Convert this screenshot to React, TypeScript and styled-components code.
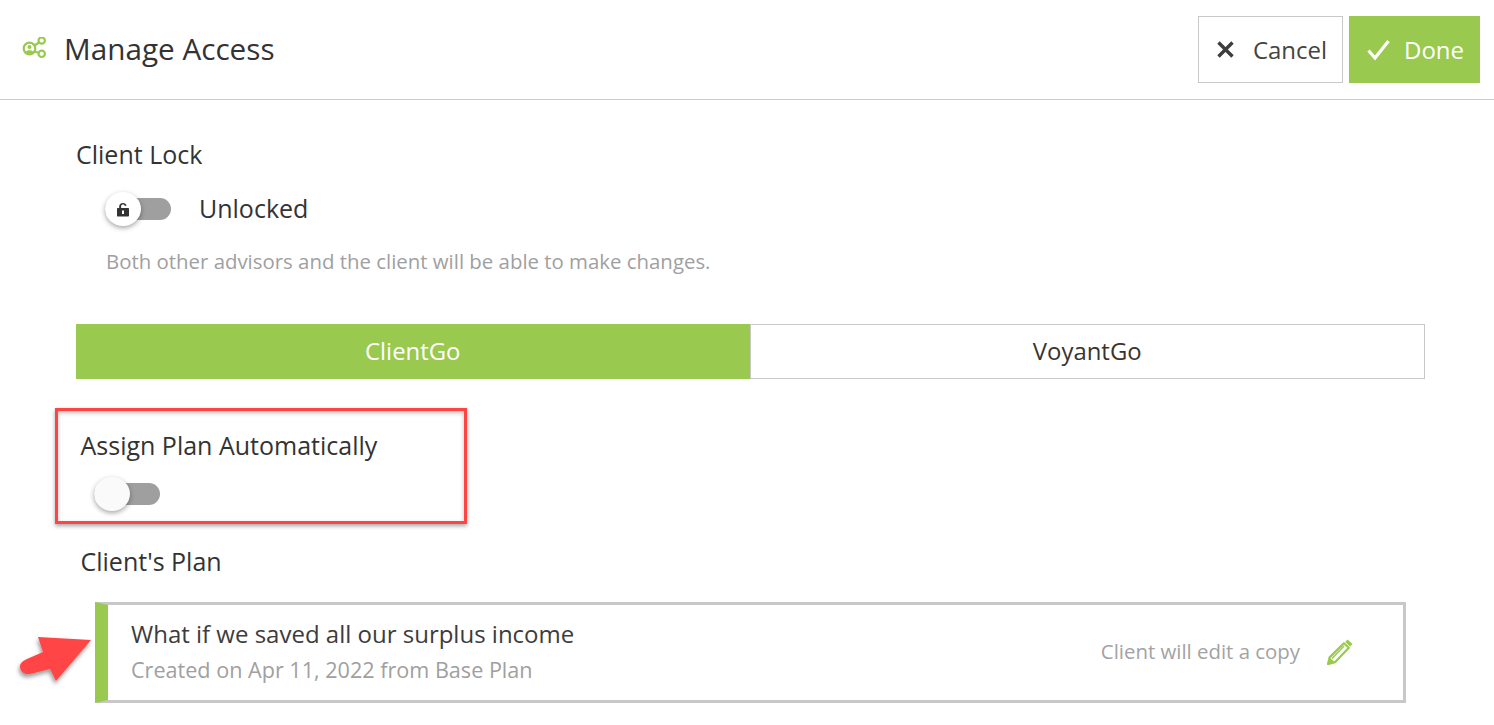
import React from "react";
import styled, { createGlobalStyle } from "styled-components";

const Global = createGlobalStyle`
  html, body { margin: 0; padding: 0; background: #fff; }
  body { font-family: "Open Sans", "Liberation Sans", sans-serif; color: #333; height: 725px; overflow: hidden; }
  * { box-sizing: border-box; }
`;

const Page = styled.div`
  position: relative;
  width: 1494px;
  height: 725px;
  overflow: hidden;
`;

const Header = styled.header`
  height: 100px;
  display: flex;
  align-items: flex-start;
  justify-content: space-between;
  padding: 16px 14px 0 22px;
  border-bottom: 1px solid #cccccc;
`;

const TitleGroup = styled.div`
  display: flex;
  align-items: center;
  height: 67px;
  gap: 16px;
`;

const Title = styled.h1`
  margin: 0 0 2px;
  font-size: 29.7px;
  font-weight: 500;
  color: #333;
  line-height: 36px;
`;

const Actions = styled.div`
  display: flex;
  gap: 6px;
`;

const ActionButton = styled.button<{ $primary?: boolean }>`
  height: 67px;
  width: ${(p) => (p.$primary ? "131px" : "145px")};
  display: flex;
  align-items: center;
  justify-content: center;
  gap: ${(p) => (p.$primary ? "14px" : "19px")};
  padding: 0 0 0 ${(p) => (p.$primary ? "2px" : "3px")};
  border: ${(p) => (p.$primary ? "none" : "1px solid #c8c8c8")};
  background: ${(p) => (p.$primary ? "#99c94f" : "#fff")};
  color: ${(p) => (p.$primary ? "#fff" : "#444")};
  font-family: inherit;
  font-size: 24px;
`;

const Content = styled.main`
  padding: 0 69px 0 76px;
`;

const SectionLabel = styled.div`
  font-size: 25px;
  font-weight: 500;
  color: #333;
  line-height: 32px;
  padding-top: 38px;
`;

const LockRow = styled.div`
  display: flex;
  align-items: center;
  height: 44px;
  margin-top: 17px;
  padding-left: 29px;
  gap: 28px;
`;

const Track = styled.span`
  position: relative;
  display: inline-block;
  width: 66px;
  height: 22px;
  border-radius: 11px;
  background: #9f9f9f;
`;

const Knob = styled.span<{ $fill: string }>`
  position: absolute;
  left: 0;
  top: -6px;
  width: 36px;
  height: 34px;
  border-radius: 50%;
  background: ${(p) => p.$fill};
  box-shadow: 0 2px 5px rgba(0, 0, 0, 0.35);
  display: flex;
  align-items: center;
  justify-content: center;
`;

const LockText = styled.span`
  font-size: 25px;
  font-weight: 500;
  color: #333;
  padding-bottom: 2px;
`;

const Hint = styled.p`
  margin: 16px 0 0 30px;
  font-size: 20.4px;
  line-height: 28px;
  color: #a0a0a0;
`;

const Tabs = styled.div`
  display: flex;
  height: 55px;
  margin-top: 49px;
  width: 1349px;
`;

const Tab = styled.div<{ $active?: boolean }>`
  flex: 1;
  display: flex;
  align-items: center;
  justify-content: center;
  padding-bottom: 2px;
  font-size: 23.9px;
  color: ${(p) => (p.$active ? "#fff" : "#3b342e")};
  background: ${(p) => (p.$active ? "#99c94f" : "#fff")};
  border: ${(p) => (p.$active ? "none" : "1px solid #c8c8c8")};
`;

const AssignBlock = styled.section`
  padding: 50px 0 0 4.5px;
`;

const InlineLabel = styled.div`
  font-size: 25px;
  font-weight: 500;
  color: #333;
  line-height: 32px;
`;

const SwitchRow = styled.div`
  margin-top: 21px;
  padding-left: 13.5px;
  height: 24px;
  display: flex;
  align-items: center;
`;

const PlanLabel = styled(InlineLabel)`
  margin-top: 39px;
`;

const PlanCard = styled.div`
  margin: 25px 0 0 14.5px;
  width: 1311px;
  height: 101px;
  display: flex;
  align-items: center;
  justify-content: space-between;
  border: 3px solid #c8c8c8;
  border-left: 13px solid #99c94f;
  padding: 0 49px 3px 23px;
`;

const PlanInfo = styled.div`
  display: flex;
  flex-direction: column;
  gap: 4px;
  padding-bottom: 1px;
`;

const PlanTitle = styled.div`
  font-size: 24px;
  line-height: 34px;
  color: #3c3c3c;
`;

const PlanMeta = styled.div`
  font-size: 21.6px;
  line-height: 30px;
  color: #a0a0a0;
`;

const PlanAction = styled.div`
  display: flex;
  align-items: center;
  gap: 27px;
  font-size: 20.4px;
  color: #a3a3a3;
`;

const Highlight = styled.div`
  position: absolute;
  left: 55px;
  top: 408px;
  width: 412px;
  height: 116px;
  border: 3px solid #ff4444;
  box-shadow: 0 2px 4px rgba(0, 0, 0, 0.35), inset 0 2px 4px rgba(0, 0, 0, 0.25);
  pointer-events: none;
`;

const ArrowMark = styled.svg`
  position: absolute;
  left: 16px;
  top: 632px;
  overflow: visible;
`;

const ShareIcon = () => (
  <svg width="26" height="26" viewBox="0 0 26 26" fill="none" stroke="#99c94f" strokeWidth="2.200">
    <circle cx="7.500" cy="11.500" r="5.800" />
    <circle cx="7.500" cy="10" r="2" fill="#99c94f" stroke="none" />
    <path d="M3.600 15c1-2.200 6.800-2.200 7.800 0l-2 1.600H5.600z" fill="#99c94f" stroke="none" />
    <circle cx="19.700" cy="3.500" r="3.200" />
    <circle cx="19.700" cy="16.800" r="3.200" />
    <path d="M12.400 8.500l4.600-3M12.400 14.500l4.600 1.500" />
  </svg>
);

const CloseIcon = () => (
  <svg width="17" height="17" viewBox="0 0 17 17" stroke="#3d3d3d" strokeWidth="3.400" fill="none">
    <path d="M1.500 1.500l14 14M15.500 1.500l-14 14" />
  </svg>
);

const CheckIcon = () => (
  <svg width="23" height="22" viewBox="0 0 23 22" stroke="#fff" strokeWidth="3.200" fill="none">
    <path d="M1.500 11.500l6.500 7.500L21.500 2" />
  </svg>
);

const LockIcon = () => (
  <svg width="14" height="15" viewBox="0 0 14 15">
    <path d="M3.200 6V4.200C3.200 2.200 4.800.9 7 .9c1.800 0 3.200 1 3.600 2.600l-1.800.4C8.600 3 7.900 2.600 7 2.600 5.900 2.600 5.100 3.300 5.100 4.300V6H12c.6 0 1 .4 1 1v6.500c0 .6-.4 1-1 1H2c-.6 0-1-.4-1-1V7c0-.6.4-1 1-1z" fill="#333" />
    <rect x="6" y="8.500" width="2" height="3.500" fill="#fff" />
  </svg>
);

const PencilIcon = () => (
  <svg width="27" height="27" viewBox="0 0 27 27">
    <path d="M20.500 1.500l5 4.500-2.300 2.500-5-4.500z" fill="#99c94f" />
    <path d="M16.900 5.300l4.900 4.500L8 24.300 1 26l1.600-6.600z" fill="none" stroke="#99c94f" strokeWidth="2.200" strokeLinejoin="round" />
    <path d="M5 20.500L17 8" stroke="#99c94f" strokeWidth="1.600" />
    <path d="M1 26l1.600-6.600 5.400 4.900z" fill="#99c94f" />
  </svg>
);

const Arrow = () => (
  <ArrowMark width="76" height="50" viewBox="0 0 76 50">
    <defs>
      <filter id="arrowShadow" x="-20%" y="-20%" width="140%" height="150%">
        <feDropShadow dx="-1" dy="3" stdDeviation="2" floodColor="#000" floodOpacity="0.4" />
      </filter>
    </defs>
    <path
      d="M22 5L75 8L40 49L34 37L14 42C9 43 4.500 40 4 35C4 31 7 29 11 27L27 20Z"
      fill="#ff4444"
      filter="url(#arrowShadow)"
    />
  </ArrowMark>
);

export default function App() {
  return (
    <Page>
      <Global />
      <Header>
        <TitleGroup>
          <ShareIcon />
          <Title>Manage Access</Title>
        </TitleGroup>
        <Actions>
          <ActionButton>
            <CloseIcon />
            Cancel
          </ActionButton>
          <ActionButton $primary>
            <CheckIcon />
            Done
          </ActionButton>
        </Actions>
      </Header>
      <Content>
        <SectionLabel>Client Lock</SectionLabel>
        <LockRow>
          <Track>
            <Knob $fill="#fff">
              <LockIcon />
            </Knob>
          </Track>
          <LockText>Unlocked</LockText>
        </LockRow>
        <Hint>Both other advisors and the client will be able to make changes.</Hint>
        <Tabs>
          <Tab $active>ClientGo</Tab>
          <Tab>VoyantGo</Tab>
        </Tabs>
        <AssignBlock>
          <InlineLabel>Assign Plan Automatically</InlineLabel>
          <SwitchRow>
            <Track>
              <Knob $fill="#fafafa" />
            </Track>
          </SwitchRow>
          <PlanLabel>Client's Plan</PlanLabel>
          <PlanCard>
            <PlanInfo>
              <PlanTitle>What if we saved all our surplus income</PlanTitle>
              <PlanMeta>Created on Apr 11, 2022 from Base Plan</PlanMeta>
            </PlanInfo>
            <PlanAction>
              Client will edit a copy
              <PencilIcon />
            </PlanAction>
          </PlanCard>
        </AssignBlock>
      </Content>
      <Highlight />
      <Arrow />
    </Page>
  );
}
